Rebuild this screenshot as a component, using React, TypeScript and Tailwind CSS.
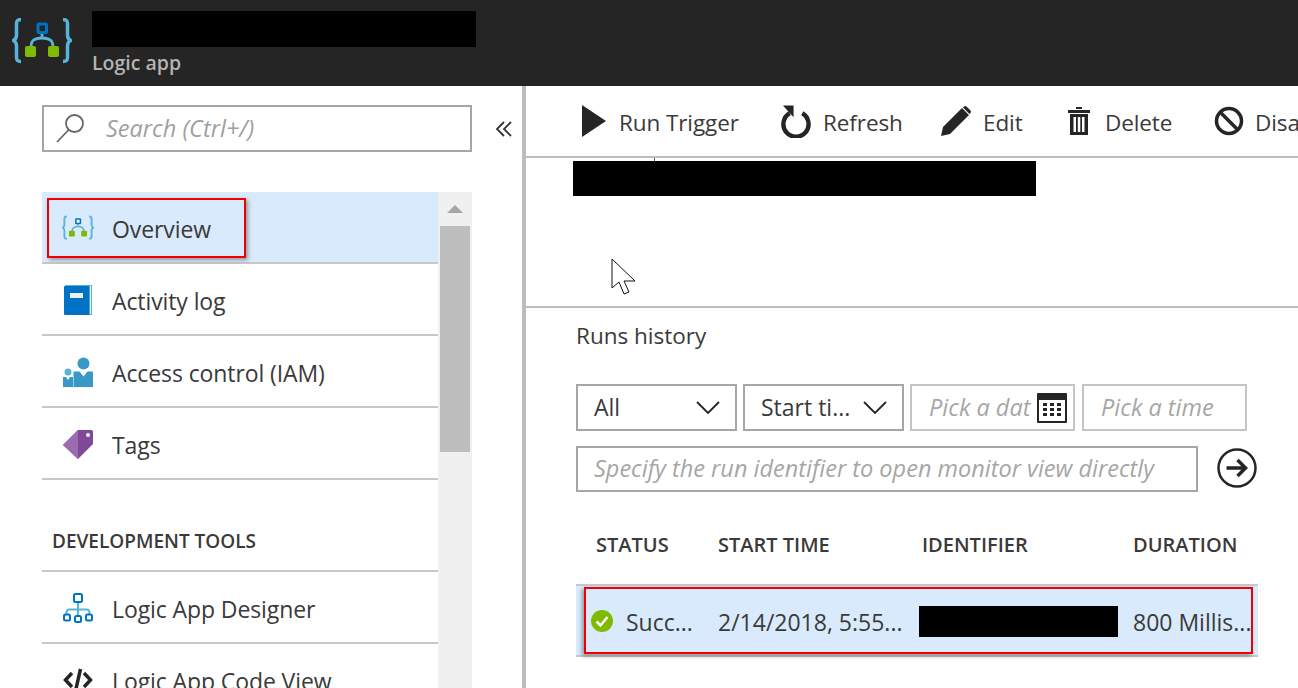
const font = { fontFamily: '"Open Sans", "Noto Sans", sans-serif' }

function LogicIcon({ className, inner }: { className: string; inner: string }) {
  return (
    <svg viewBox="0 0 60 46" className={className} fill="none">
      <path d="M9 1.500C5 1.500 4.500 3 4.500 6v11c0 3-1 4.500-3 5.500 2 1 3 2.500 3 5.500v11c0 3 .5 4.500 4.500 4.500" stroke="#59b4d9" strokeWidth="3.500" />
      <path d="M51 1.500c4 0 4.500 1.500 4.500 4.500v11c0 3 1 4.500 3 5.500-2 1-3 2.500-3 5.500v11c0 3-.5 4.500-4.500 4.500" stroke="#59b4d9" strokeWidth="3.500" />
      <path d="M30 15v5M30 20c-7 0-11 2-11 9M30 20c7 0 11 2 11 9" stroke="#59b4d9" strokeWidth="2.800" />
      <rect x="26" y="6" width="8.500" height="8.500" rx="1" fill={inner} stroke="#0072c6" strokeWidth="3" />
      <rect x="13" y="28" width="11" height="11" rx="2" fill="#7fba00" />
      <rect x="36" y="28" width="11" height="11" rx="2" fill="#7fba00" />
    </svg>
  )
}

function BookIcon() {
  return (
    <svg viewBox="0 0 30 30" className="h-[30px] w-[30px]">
      <path d="M2 0h27v30H2z" fill="#59b4d9" />
      <path d="M26.500 1H28v28h-1.500z" fill="#e8f3f9" />
      <rect x="1" y="1" width="25.500" height="29" rx="1" fill="#0072c6" />
      <rect x="7" y="8" width="13" height="5" fill="#e8f3f9" />
    </svg>
  )
}

function PeopleIcon() {
  return (
    <svg viewBox="0 0 30 30" className="h-[30px] w-[30px]">
      <circle cx="20.500" cy="6.500" r="6" fill="#3999c6" />
      <path d="M10.500 14.500h6l4 5 4-5h5.500V30h-19.500z" fill="#3999c6" />
      <circle cx="5" cy="15" r="3.500" fill="#59b4d9" />
      <path d="M0 20h3l2 3 2-3h3v10H0z" fill="#3999c6" />
    </svg>
  )
}

function TagIcon() {
  return (
    <svg viewBox="0 0 30 30" className="h-[30px] w-[30px]">
      <path d="M0 16 15 1h13a2 2 0 0 1 2 2v12L15 30z" fill="#804998" />
      <path d="M0 16 15 1v29z" fill="#9a6bad" />
      <circle cx="25" cy="6" r="2" fill="#fff" />
    </svg>
  )
}

function DesignerIcon() {
  return (
    <svg viewBox="0 0 30 30" className="h-[30px] w-[30px]" fill="none">
      <path d="M15 9v14M3.500 22v-2.500c0-2 1-3 3-3h17c2 0 3 1 3 3V22" stroke="#59b4d9" strokeWidth="2" />
      <rect x="11" y="1" width="8" height="8" rx="1.500" stroke="#0072c6" strokeWidth="2" />
      <rect x="1" y="21.500" width="6" height="6" rx="1.500" stroke="#0072c6" strokeWidth="2" />
      <rect x="12" y="23" width="6" height="6" rx="1.500" stroke="#0072c6" strokeWidth="2" />
      <rect x="23" y="21.500" width="6" height="6" rx="1.500" stroke="#0072c6" strokeWidth="2" />
    </svg>
  )
}

function CodeIcon() {
  return (
    <svg viewBox="0 0 30 24" className="h-[24px] w-[30px]" fill="none" stroke="#252525" strokeWidth="3.500">
      <path d="M9 5 2.500 12 9 19M21 5l6.500 7L21 19M17.500 1 12.500 23" />
    </svg>
  )
}

function Chevron() {
  return (
    <svg viewBox="0 0 24 13" className="h-[13px] w-[24px] shrink-0" fill="none" stroke="#252525" strokeWidth="1.800">
      <path d="M1 1l11 11L23 1" />
    </svg>
  )
}

function NavRow({ icon, label, active }: { icon: React.ReactNode; label: string; active?: boolean }) {
  return (
    <div className={`flex h-[72px] items-center border-b-2 border-[#c8c8c8] pt-[1px] ${active ? 'bg-[#d8eafb]' : ''}`}>
      <div className="flex w-[70px] shrink-0 justify-center pl-[1px]">{icon}</div>
      <span className="mt-[3px] text-[23px] tracking-[-0.1px] text-[#3a3a3a] whitespace-nowrap">{label}</span>
    </div>
  )
}

function ToolbarButton({ icon, label, width }: { icon: React.ReactNode; label: string; width: string }) {
  return (
    <div className={`flex shrink-0 items-center ${width}`}>
      {icon}
      <span className="mt-[4px] text-[22.500px] tracking-[-0.1px] text-[#3a3a3a] whitespace-nowrap">{label}</span>
    </div>
  )
}

export default function App() {
  return (
    <div className="flex h-[688px] w-[1298px] flex-col overflow-hidden bg-white" style={font}>
      {/* Blade header */}
      <div className="flex h-[86px] shrink-0 bg-[#252525]">
        <div className="ml-[12px] mt-[18px] h-[46px] w-[60px]">
          <LogicIcon className="h-[46px] w-[60px]" inner="#252525" />
        </div>
        <div className="ml-[20px] mt-[11px]">
          <div className="h-[36px] w-[384px] bg-black" />
          <div className="mt-[3px] text-[19.500px] font-semibold leading-[26px] text-[#b4b4b4]">Logic app</div>
        </div>
      </div>

      <div className="flex min-h-0 flex-1">
        {/* Left menu */}
        <div className="flex w-[526px] shrink-0 flex-col border-r-4 border-[#bdbdbd]">
          <div className="ml-[42px] mt-[19px] flex items-center">
            <div className="flex h-[47px] w-[430px] items-center border-2 border-[#a6a6a6] pl-[12px]">
              <svg viewBox="0 0 30 30" className="h-[30px] w-[30px]" fill="none" stroke="#666" strokeWidth="1.800">
                <circle cx="18.500" cy="9.500" r="8.500" />
                <path d="M12.500 16 1 28" />
              </svg>
              <span className="ml-[20px] text-[23.500px] italic text-[#a0a0a0]">Search (Ctrl+/)</span>
            </div>
            <svg viewBox="0 0 18 16" className="ml-[23px] h-[16px] w-[18px]" fill="none" stroke="#333" strokeWidth="1.800">
              <path d="M9 1 2 8l7 7M16 1 9 8l7 7" />
            </svg>
          </div>

          <div className="ml-[42px] mt-[40px] flex min-h-0 w-[430px] flex-1">
            <div className="w-[396px] shrink-0">
              <div className="relative">
                <NavRow active label="Overview" icon={<LogicIcon className="h-[26px] w-[32px]" inner="#fff" />} />
                <div className="absolute left-[5px] top-[6px] h-[60px] w-[199px] border-2 border-[#f00000] shadow-[2px_2px_4px_rgba(0,0,0,0.35)]" />
              </div>
              <NavRow label="Activity log" icon={<BookIcon />} />
              <NavRow label="Access control (IAM)" icon={<PeopleIcon />} />
              <NavRow label="Tags" icon={<TagIcon />} />
              <div className="flex h-[92px] items-end border-b-2 border-[#c8c8c8] pb-[15px] pl-[10px] text-[19px] font-semibold text-[#3a3a3a]">
                DEVELOPMENT TOOLS
              </div>
              <NavRow label="Logic App Designer" icon={<DesignerIcon />} />
              <NavRow label="Logic App Code View" icon={<CodeIcon />} />
            </div>
            {/* Scrollbar */}
            <div className="w-[34px] bg-[#f0f0f0] px-[2px]">
              <div className="flex h-[34px] items-center justify-center">
                <div className="h-0 w-0 border-x-[8px] border-b-[8px] border-x-transparent border-b-[#a6a6a6]" />
              </div>
              <div className="h-[226px] bg-[#bdbdbd]" />
            </div>
          </div>
        </div>

        {/* Main content */}
        <div className="flex min-w-0 flex-1 flex-col">
          <div className="flex h-[72px] shrink-0 items-center overflow-hidden border-b-2 border-[#bdbdbd] pl-[56px]">
            <ToolbarButton
              width="w-[198px]"
              label="Run Trigger"
              icon={<svg viewBox="0 0 24 32" className="mr-[13px] h-[32px] w-[24px]"><path d="M0 0 24 16 0 32z" fill="#252525" /></svg>}
            />
            <ToolbarButton
              width="w-[160px]"
              label="Refresh"
              icon={
                <svg viewBox="0 0 32 34" className="mr-[12px] h-[34px] w-[31px]" fill="none">
                  <path d="M23 9a13 13 0 1 1-13 0" stroke="#252525" strokeWidth="4.500" />
                  <path d="M3 1h11v12z" fill="#252525" />
                </svg>
              }
            />
            <ToolbarButton
              width="w-[128px]"
              label="Edit"
              icon={
                <svg viewBox="0 0 32 32" className="mr-[11px] h-[32px] w-[32px]">
                  <path d="M1 31l2-9L22 3l7 7L10 29zM24 1.500a2 2 0 0 1 2.500 0l4 4a2 2 0 0 1 0 2.500L29.500 9 23 2.500z" fill="#252525" />
                </svg>
              }
            />
            <ToolbarButton
              width="w-[146px]"
              label="Delete"
              icon={
                <svg viewBox="0 0 22 28" className="mr-[15px] h-[28px] w-[22px]" fill="#252525">
                  <path d="M8 0h6v2H8zM0 3h22v3H0z" />
                  <path fillRule="evenodd" d="M2 7h18v21H2zM5.500 10v15h2.500V10zM9.800 10v15h2.500V10zM14 10v15h2.500V10z" />
                </svg>
              }
            />
            <ToolbarButton
              width="w-[120px]"
              label="Disable"
              icon={
                <svg viewBox="0 0 30 30" className="mr-[11px] h-[30px] w-[30px]" fill="none" stroke="#252525" strokeWidth="3.500">
                  <circle cx="15" cy="15" r="12.500" />
                  <path d="M6 6l18 18" />
                </svg>
              }
            />
          </div>

          <div className="h-[150px] shrink-0 border-b-2 border-[#bdbdbd] pl-[47px]">
            <div className="ml-[81px] h-[3px] w-px bg-[#555]" />
            <div className="h-[35px] w-[463px] bg-black" />
            <div className="relative">
              <svg viewBox="0 0 26 38" className="absolute left-[38px] top-[62px] h-[38px] w-[26px]" fill="#fff" stroke="#111" strokeWidth="1">
                <path d="M1 1v29l7-6 5 12 5-2-5-11h11z" />
              </svg>
            </div>
          </div>

          <div className="pl-[50px]">
            <div className="mt-[13px] text-[22.500px] leading-[30px] text-[#3a3a3a]">Runs history</div>

            <div className="mt-[33px] flex gap-[6px] text-[23px]">
              <div className="flex h-[47px] w-[161px] items-center justify-between border-2 border-[#a6a6a6] pl-[16px] pr-[15px] text-[#3a3a3a]">
                <span>All</span>
                <Chevron />
              </div>
              <div className="flex h-[47px] w-[161px] items-center justify-between border-2 border-[#a6a6a6] pl-[16px] pr-[15px] text-[#3a3a3a]">
                <span className="whitespace-nowrap">Start ti...</span>
                <Chevron />
              </div>
              <div className="flex h-[47px] w-[165px] items-center border-2 border-[#c4c4c4] pl-[17px] text-[23.500px] italic text-[#a6a6a6]">
                <span className="w-[108px] shrink-0 whitespace-nowrap">Pick a dat</span>
                <svg viewBox="0 0 30 30" className="h-[30px] w-[30px] shrink-0">
                  <rect x="0" y="0" width="30" height="30" rx="1" fill="#252525" />
                  <rect x="2" y="7" width="26" height="21" fill="#fff" />
                  <path d="M6 10h4v3H6zM13 10h4v3h-4zM20 10h4v3h-4zM6 15h4v3H6zM13 15h4v3h-4zM20 15h4v3h-4zM6 20h4v3H6zM13 20h4v3h-4zM20 20h4v3h-4z" fill="#252525" />
                </svg>
              </div>
              <div className="ml-[1px] flex h-[47px] w-[165px] items-center border-2 border-[#c4c4c4] pl-[17px] text-[23.500px] italic text-[#a6a6a6]">
                Pick a time
              </div>
            </div>

            <div className="mt-[15px] flex items-center">
              <div className="flex h-[46px] w-[622px] items-center border-2 border-[#a6a6a6] pb-[1px] pl-[16px] text-[23.500px] italic text-[#a6a6a6] whitespace-nowrap">
                Specify the run identifier to open monitor view directly
              </div>
              <svg viewBox="0 0 40 40" className="ml-[19px] -mt-[2px] h-[40px] w-[40px]" fill="none" stroke="#252525">
                <circle cx="20" cy="20" r="18.500" strokeWidth="2.500" />
                <path d="M9.500 20h19M20.500 12l8 8-8 8" strokeWidth="3.500" />
              </svg>
            </div>

            <div className="mt-[37px] grid w-[682px] grid-cols-[122px_204px_212px_124px] pl-[20px] text-[20px] font-semibold leading-[32px] text-[#3a3a3a]">
              <span>STATUS</span>
              <span>START TIME</span>
              <span>IDENTIFIER</span>
              <span className="-ml-[1px]">DURATION</span>
            </div>

            <div className="relative mt-[23px] grid h-[73px] w-[682px] grid-cols-[142px_204px_212px_124px] items-center border-y-2 border-[#c8c8c8] bg-[#d8eafb] text-[23px] text-[#3a3a3a]">
              <div className="flex items-center pl-[15px]">
                <svg viewBox="0 0 22 22" className="h-[22px] w-[22px] shrink-0">
                  <circle cx="11" cy="11" r="11" fill="#7fba00" />
                  <path d="M5.500 11.500 9.500 15.500 16.500 7" fill="none" stroke="#fff" strokeWidth="2.500" />
                </svg>
                <span className="ml-[13px] mt-[3px] whitespace-nowrap">Succ...</span>
              </div>
              <span className="mt-[3px] whitespace-nowrap">2/14/2018, 5:55...</span>
              <div className="-ml-[3px] mt-[2px] h-[31px] w-[199px] bg-black" />
              <span className="-ml-[1px] mt-[3px] whitespace-nowrap">800 Millis...</span>
              <div className="absolute left-[8px] top-[1px] h-[67px] w-[669px] border-2 border-[#f00000] shadow-[-2px_2px_4px_rgba(0,0,0,0.35)]" />
            </div>
          </div>
        </div>
      </div>
    </div>
  )
}
